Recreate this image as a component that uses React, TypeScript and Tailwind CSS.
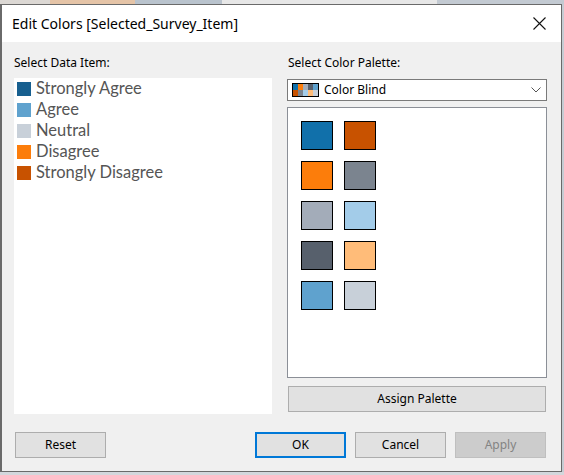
import React from 'react';

const ui = { fontFamily: '"Noto Sans", "Open Sans", Arial, sans-serif' };
const itemFont = { fontFamily: 'Lato, "Open Sans", Arial, sans-serif' };

const dataItems = [
  { name: 'Strongly Agree', color: '#175f8f' },
  { name: 'Agree', color: '#5fa2ce' },
  { name: 'Neutral', color: '#c8d0d9' },
  { name: 'Disagree', color: '#fc7d0b' },
  { name: 'Strongly Disagree', color: '#c85200' },
];

const palette = ['#1170aa', '#fc7d0b', '#a3acb9', '#57606c', '#5fa2ce', '#c85200', '#7b848f', '#a3cce9', '#ffbc79', '#c8d0d9'];

// swatch grid is filled row by row: left column = first five, right = last five
const gridOrder = [0, 5, 1, 6, 2, 7, 3, 8, 4, 9];

const App: React.FC = () => {
  return (
    <div className="w-[564px] h-[475px] bg-[#d3d7dc] flex flex-col overflow-hidden" style={ui}>
      {/* what's behind the dialog */}
      <div className="h-[4px] flex shrink-0">
        <div className="w-[50px] bg-[#dcd8d4]" />
        <div className="w-[85px] bg-[#e5c4a7]" />
        <div className="w-[87px] bg-[#b9c3cd]" />
        <div className="w-[215px] bg-[#e7e7e7]" />
        <div className="flex-1 bg-[#c3cad2]" />
      </div>
      <div className="flex">
        <div className="w-[562px] h-[468px] border border-[#6a6a6a] border-l-2 bg-[#f0f0f0] flex flex-col shrink-0">
          {/* title bar */}
          <div className="h-[37px] bg-white flex items-center justify-between pl-[10px] pr-[15px] shrink-0">
            <span className="text-[14px] text-black">Edit Colors [Selected_Survey_Item]</span>
            <svg width="13" height="13" viewBox="0 0 13 13">
              <path d="M0.5 0.5 L12.5 12.5 M12.5 0.5 L0.5 12.5" stroke="#111" strokeWidth="1.1" />
            </svg>
          </div>

          <div className="flex-1 flex flex-col pl-[12px] pt-[13px]">
            <div className="flex gap-[15px]">
              {/* left column */}
              <div className="w-[258px] flex flex-col">
                <div className="h-[16px] text-[12px] leading-[16px] text-black">Select Data Item:</div>
                <div className="mt-[7px] h-[336px] bg-white pl-[3px]">
                  {dataItems.map(d => (
                    <div key={d.name} className="h-[21px] flex items-center gap-[5px]">
                      <div className="w-[14px] h-[14px] shrink-0" style={{ backgroundColor: d.color }} />
                      <span className="text-[16.5px] leading-[21px] text-[#555]" style={itemFont}>{d.name}</span>
                    </div>
                  ))}
                </div>
              </div>

              {/* right column */}
              <div className="w-[260px] flex flex-col">
                <div className="h-[16px] text-[12px] leading-[16px] text-black pl-[1px]">Select Color Palette:</div>
                <div className="mt-[8px] h-[22px] bg-white border border-[#7a7a7a] flex items-center pl-[4px] pr-[5px]">
                  <div className="w-[27px] h-[14px] border border-black grid grid-cols-5 grid-rows-2 shrink-0">
                    {palette.map(c => (
                      <div key={c} style={{ backgroundColor: c }} />
                    ))}
                  </div>
                  <span className="ml-[5px] text-[12px] text-black flex-1">Color Blind</span>
                  <svg width="10" height="6" viewBox="0 0 10 6">
                    <path d="M0.5 0.5 L5 5 L9.5 0.5" fill="none" stroke="#555" strokeWidth="1" />
                  </svg>
                </div>
                <div className="mt-[6px] h-[271px] bg-white border border-[#8b8f97] pl-[13px] pt-[13px]">
                  <div className="grid grid-cols-[32px_32px] gap-x-[11px] gap-y-[11px]">
                    {gridOrder.map(i => (
                      <div key={i} className="w-[32px] h-[29px] border border-black" style={{ backgroundColor: palette[i] }} />
                    ))}
                  </div>
                </div>
                <button className="mt-[8px] h-[26px] ml-[1px] w-[258px] bg-[#e1e1e1] border border-[#adadad] text-[12px] text-black">
                  Assign Palette
                </button>
              </div>
            </div>

            {/* bottom buttons */}
            <div className="mt-[18px] flex items-center">
              <button className="ml-[1px] w-[91px] h-[26px] bg-[#e1e1e1] border border-[#adadad] text-[12px] text-black">Reset</button>
              <div className="flex-1" />
              <div className="flex gap-[9px] pr-[15px]">
                <button className="w-[91px] h-[26px] bg-[#e1e1e1] border-2 border-[#0078d7] text-[12px] text-black">OK</button>
                <button className="w-[91px] h-[26px] bg-[#e1e1e1] border border-[#adadad] text-[12px] text-black">Cancel</button>
                <button className="w-[91px] h-[26px] bg-[#cccccc] border border-[#bfbfbf] text-[12px] text-[#838383]">Apply</button>
              </div>
            </div>
          </div>
        </div>
        <div className="flex-1 bg-[#c6ccd3]" />
      </div>
    </div>
  );
};

export default App;
